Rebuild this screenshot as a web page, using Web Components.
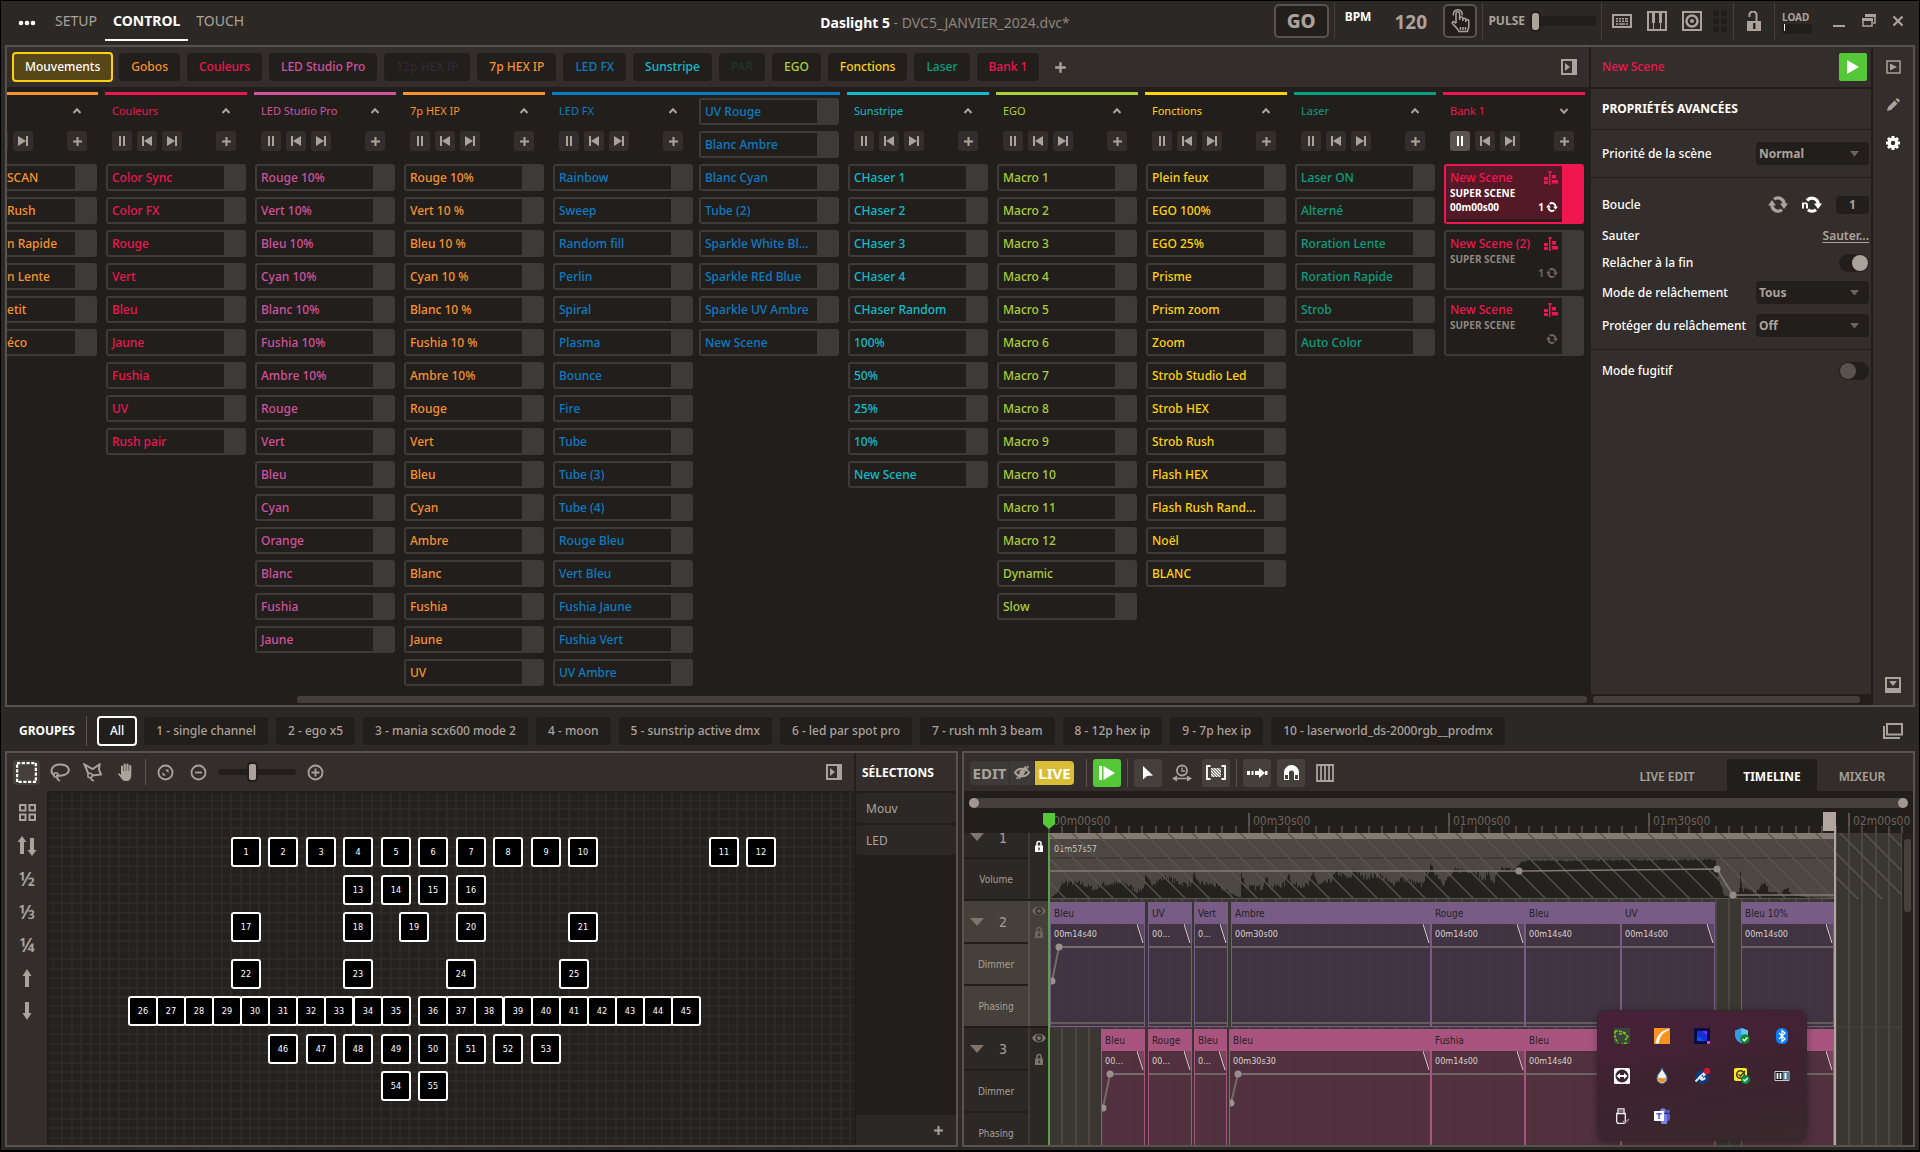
<!doctype html>
<html lang="fr">
  <head>
    <meta charset="utf-8">
    <meta name="viewport" content="width=device-width, initial-scale=1">
    <title>Daslight 5</title>
    <style>
      html {
        --bg: #2c2825;
        --panel: #332e2b;
        --dark: #211e1b;
        --line: #5a524c;
        --muted: #aba29b;
        --raised: #3e3a37;
        --orange: #f7922d;
        --red: #ee1650;
        --pink: #d1529e;
        --blue: #0b7cc2;
        --cyan: #10bccb;
        --lime: #abd037;
        --yellow: #ffd20a;
        --green: #0a9f80;
        --go: #54c837;
        font: 500 12px/16px "Noto Sans", "Open Sans", sans-serif;
        color: var(--muted);
        background: #000;
      }
      body {
        margin: 0;
      }
    </style>
  </head>
  <body>
    <light-desk></light-desk>
    <script>
      const BASE = `
        * { box-sizing: border-box; }
        button, input, select { font: inherit; color: inherit; margin: 0; padding: 0; border: 0; background: none; }
        button { cursor: pointer; }
        a { color: inherit; }
        h1, h2, p { margin: 0; font: inherit; }
      `;

      const define = (name, css, html) => {
        customElements.define(name, class extends HTMLElement {
          constructor() {
            super();
            this.attachShadow({ mode: 'open' });
          }
          connectedCallback() {
            const markup = typeof html === 'function' ? html(this) : html;
            this.shadowRoot.innerHTML = `<style>${BASE}${css}</style>${markup}`;
          }
        });
      };

      // [width, height, svg body]
      const ICONS = {
        dots: [18, 6, '<circle cx="3" cy="3" r="2.3"/><circle cx="9" cy="3" r="2.3"/><circle cx="15" cy="3" r="2.3"/>'],
        plus: [11, 11, '<path d="M4.500 1h2v3.500H10v2H6.500V10h-2V6.500H1v-2h3.500z"/>'],
        up: [10, 8, '<path d="M1.500 6 5 2.200 8.500 6" fill="none" stroke="currentColor" stroke-width="2"/>'],
        down: [10, 8, '<path d="M1.500 2 5 5.800 8.500 2" fill="none" stroke="currentColor" stroke-width="2"/>'],
        pause: [10, 10, '<path d="M2 0h2v10H2zM6 0h2v10H6z"/>'],
        prev: [12, 12, '<path d="M1 1h2v10H1zM11 1v10L3 6z"/>'],
        next: [12, 12, '<path d="M9 1h2v10H9zM1 1v10l8-5z"/>'],
        tap: [22, 26, '<path d="M7 15V5.500a1.800 1.800 0 0 1 3.600 0V12m0-1.500a1.600 1.600 0 0 1 3.200 0V13m0-1.200a1.500 1.500 0 0 1 3 0V14m0-1a1.500 1.500 0 0 1 3 0v5c0 3-1 4-1.500 5.500H10C8.500 20 6 18.500 3.500 15.500c-1-1.500 1-2.500 2.200-1.300L7 15.500M4.500 7.500a4.500 4.500 0 1 1 8.600 0M14 19v3m2.500-3v3M11.500 19v3" fill="none" stroke="currentColor" stroke-width="1.500"/>'],
        keyboard: [20, 14, '<path d="M1 1h18v12H1z" fill="none" stroke="currentColor" stroke-width="2"/><path d="M4 4h2v1.500H4zm3 0h2v1.500H7zm3 0h2v1.500h-2zm3 0h3v1.500h-3zM4 6.500h2V8H4zm3 0h2V8H7zm3 0h2V8h-2zm3 0h3V8h-3zM4 9.200h2v1.500H4zm3 0h6v1.500H7zm7 0h2v1.500h-2z"/>'],
        piano: [20, 20, '<path d="M1 1h18v18H1z" fill="none" stroke="currentColor" stroke-width="2"/><path d="M5 1h3v11H5zM12 1h3v11h-3zM6 12h1v7H6zM13 12h1v7h-1z"/>'],
        disc: [20, 20, '<path d="M1 1h18v18H1z" fill="none" stroke="currentColor" stroke-width="2"/><circle cx="10" cy="10" r="5.500" fill="none" stroke="currentColor" stroke-width="2.500"/><circle cx="10" cy="10" r="2"/>'],
        pads: [14, 24, '<rect y="1" width="6" height="6" rx="1"/><rect x="8" y="1" width="6" height="6" rx="1"/><rect y="9" width="6" height="6" rx="1"/><rect x="8" y="9" width="6" height="6" rx="1"/><rect y="17" width="6" height="6" rx="1"/><rect x="8" y="17" width="6" height="6" rx="1"/>'],
        unlock: [14, 20, '<path d="M2.500 6V4.500a3.500 3.500 0 0 1 7-1V10" fill="none" stroke="currentColor" stroke-width="2"/><path d="M0 10h14v10H0z"/><path d="M6 12h2.500v6H6z" fill="#2c2825"/>'],
        min: [14, 14, '<path d="M1 11h12v2H1z"/>'],
        restore: [14, 14, '<path d="M4 3V1h9v8h-2" fill="none" stroke="currentColor" stroke-width="1.500"/><path d="M3 0h11v3H3z"/><path d="M1 5h9v7H1z" fill="none" stroke="currentColor" stroke-width="1.500"/><path d="M0 4h11v3H0z"/>'],
        close: [12, 12, '<path d="m1.500 1.500 9 9m0-9-9 9" stroke="currentColor" stroke-width="2.200"/>'],
        dock: [16, 16, '<path d="M0 0h16v16H0zM2 2v12h9V2z" fill-rule="evenodd"/><path d="M4 4v8l5-4z"/>'],
        dockdown: [16, 16, '<path d="M0 0h16v16H0zM2 2v9h12V2z" fill-rule="evenodd"/><path d="M4 4h8l-4 5z"/>'],
        preview: [15, 14, '<path d="M1 1h13v12H1z" fill="none" stroke="currentColor" stroke-width="1.500"/><path d="M4 3.500v7L11 7z"/>'],
        pencil: [14, 14, '<path d="m1 13 1-4 6.500-6.500 3 3L5 12zM9.500 1.500l1-1a1 1 0 0 1 1.400 0l1.600 1.600a1 1 0 0 1 0 1.400l-1 1z"/>'],
        gear: [14, 14, '<circle cx="7" cy="7" r="3.800" fill="none" stroke="currentColor" stroke-width="3.200"/><path d="M7 0v2.500M7 11.500V14M0 7h2.500m9 0H14M2 2l2 2m6 6 2 2m0-10-2 2m-6 6-2 2" stroke="currentColor" stroke-width="3"/>'],
        play: [14, 14, '<path d="M1 0v14l12-7z"/>'],
        loop: [20, 17, '<path d="M6 3.200A6.300 6.300 0 0 1 16.200 8M14 13.800A6.300 6.300 0 0 1 3.800 9" fill="none" stroke="currentColor" stroke-width="3.200"/><path d="M0 9.500h8L4 4zM12 7.500h8L16 13z"/>'],
        loopn: [20, 17, '<path d="M5 4.500A6.300 6.300 0 0 1 16.200 8M14 13.800a6.300 6.300 0 0 1-8 0" fill="none" stroke="currentColor" stroke-width="3.200"/><path d="M12 7.500h8L16 13zM0 6.500h2v.8a2.200 2.200 0 0 1 4 1.200v4H4V9c0-1.200-2-1.200-2 0v3.500H0z"/>'],
        scene: [14, 14, '<path d="M5 0h1.500v14H5zM4.500 0h3v2h-3zM8 4h4v3.500H8zM0 6h4v3H0zM0 10h4v3H0zM8 9h6v3.500H8z"/>'],
        tri: [9, 6, '<path d="M0 0h9L4.500 5.500z"/>'],
        windows: [20, 16, '<path d="M4 1h15v10.500H4zM1 3v12h16" fill="none" stroke="currentColor" stroke-width="2"/>'],
        marquee: [21, 21, '<path d="M1 1h19v19H1z" fill="none" stroke="currentColor" stroke-width="2.500" stroke-dasharray="3.200 1.550"/>'],
        lasso: [20, 19, '<path d="M4.500 12.500C-1 9 1.500 1.500 10 1.500c10 0 11.500 8 4 10.500-2.500.8-5 .8-8 .5" fill="none" stroke="currentColor" stroke-width="2"/><circle cx="6" cy="12" r="2.200" fill="none" stroke="currentColor" stroke-width="1.500"/><path d="M7 14c0 2 1 3 3 4" fill="none" stroke="currentColor" stroke-width="1.800"/>'],
        polygon: [20, 19, '<path d="M5.500 11 1.500 1.500 9.500 6l7-4.500-.5 5 2 5-9 1" fill="none" stroke="currentColor" stroke-width="2"/><circle cx="7" cy="12.500" r="2.200" fill="none" stroke="currentColor" stroke-width="1.500"/><path d="M8 14c-.5 2 .5 3 3 4" fill="none" stroke="currentColor" stroke-width="1.800"/>'],
        hand: [17, 18, '<path d="M4 11V3.500a1 1 0 0 1 2 0V8h.6V1.500a1 1 0 0 1 2.200 0V8h.6V1.500a1 1 0 0 1 2.200 0V8h.6V3a1 1 0 0 1 2.100 0v9c0 3-1.500 6-4 6H8c-2 0-3-2-7-7 0-1.200 1.500-1 3 1z"/>'],
        fit: [17, 17, '<circle cx="8.500" cy="8.500" r="7" fill="none" stroke="currentColor" stroke-width="1.800"/><path d="M8 5.500h3.500V9zM9 11.500H5.500V8z"/>'],
        zoomout: [17, 17, '<circle cx="8.500" cy="8.500" r="7" fill="none" stroke="currentColor" stroke-width="1.800"/><path d="M5 7.600h7v1.800H5z"/>'],
        zoomin: [17, 17, '<circle cx="8.500" cy="8.500" r="7" fill="none" stroke="currentColor" stroke-width="1.800"/><path d="M4.500 7.600h8v1.800h-8zM7.600 4.500h1.800v8H7.600z"/>'],
        quad: [17, 17, '<path d="M1 1h5.500v5.500H1zm9.500 0H16v5.500h-5.500zM1 10.500h5.500V16H1zm9.500 0H16V16h-5.500z" fill="none" stroke="currentColor" stroke-width="2"/>'],
        swap: [20, 20, '<path d="M5 0 .5 6H3v12h4V6h2.500zM15 20l-4.500-6H13V2h4v12h2.500z"/>'],
        arrowup: [10, 18, '<path d="M5 0 .5 7H3v11h4V7h2.500z"/>'],
        arrowdown: [10, 18, '<path d="M5 18 .5 11H3V0h4v11h2.500z"/>'],
        hidden: [16, 13, '<path d="M1 6.500C4 1.500 12 1.500 15 6.500 12 11.500 4 11.500 1 6.500z" fill="none" stroke="currentColor" stroke-width="2"/><circle cx="8" cy="6.500" r="2.500"/><path d="M2.500 13 12 0M5 13 14.500 0" stroke="currentColor" stroke-width="1.400"/>'],
        eye: [14, 10, '<path d="M0 5C3-.8 11-.8 14 5 11 10.800 3 10.800 0 5z"/><circle cx="7" cy="5" r="2.700" fill="none" stroke="#2c2825" stroke-width="1.400"/>'],
        lock: [8, 12, '<path d="M2 6V3.500a2 2 0 0 1 4 0V6" fill="none" stroke="currentColor" stroke-width="1.500"/><path d="M0 5.500h8V12H0z"/><path d="M3.400 7.500h1.300v2.800H3.400z" fill="#2c2825"/>'],
        playfrom: [16, 14, '<path d="M0 0h3v14H0zM4.500 0 16 7 4.500 14z"/>'],
        cursor: [10, 14, '<path d="M0 0v13.500l4-3.500 6-.5z"/>'],
        clock: [20, 18, '<circle cx="10" cy="6.500" r="5" fill="none" stroke="currentColor" stroke-width="1.800"/><path d="M10 3.500v3.500h3" fill="none" stroke="currentColor" stroke-width="1.300"/><path d="m0 14.500 5-3v2.200h10v-2.200l5 3-5 3v-2.200H5v2.200z"/>'],
        region: [20, 15, '<path d="M4.500 1H1v13h3.500M15.500 1H19v13h-3.500" fill="none" stroke="currentColor" stroke-width="1.800"/><path d="M5 3h10v9H5z" opacity=".45"/><path d="m5 3 9 9M8 3l7 7m-4-7 4 4M5 6l6 6M5 9l3 3" stroke="currentColor"/>'],
        snap: [21, 10, '<path d="M0 3h3v4H0zm4.500 0h2v4h-2zM8 3h4V0l6 5-6 5V7H8zm10 0h2.500v4H18z"/>'],
        magnet: [17, 17, '<path d="M1 16V8.500a7.500 7.500 0 0 1 15 0V16h-5V9a2.500 2.500 0 0 0-5 0v7z"/><path d="M2 11h3v4H2zm10 0h3v4h-3z" fill="#45403a"/>'],
        bars: [18, 18, '<path d="M1 1h16v16H1zM5 1v16M9 1v16m4-16v16" fill="none" stroke="currentColor" stroke-width="1.800"/>'],
        trackdown: [14, 8, '<path d="M0 0h14L7 8z"/>'],
        marker: [12, 17, '<path d="M0 0h12v11l-6 5-6-5z"/>'],
        nvidia: [16, 16, '<path d="M0 0h16v16H0z" fill="#3c423c"/><path d="M1 3h4l7 2M1 3v7l3 5m1-9 5-1 4 4-3 3m2 3-5 1" fill="none" stroke="#76c81a" stroke-width="1.600" stroke-dasharray="3 1"/>'],
        orangeapp: [16, 16, '<path d="M0 0h16v16H0z" fill="#f7931e"/><path d="M2 15C3 8 7 3 15 1.500 9 4 5 8 4.500 15z" fill="#fff" stroke="#fff"/>'],
        blueapp: [16, 16, '<path d="M0 0h16v16H0z" fill="#040d45"/><path d="M3 3h10v10H3z" fill="#1530d8"/><path d="M8 3h5v4z" fill="#7a2fe0"/><path d="M3 13V8l8 5z" fill="#0a56e8"/><path d="M13 13h3v3h-3z" fill="#e03af0"/>'],
        shield: [16, 16, '<path d="M1 2.500 7.500 0 14 2.500V7c0 4-3 7-6.500 8.500C4 14 1 11 1 7z" fill="#2f9de0"/><path d="M7.500 0 14 2.500V7H7.500z" fill="#62c5f3"/><circle cx="11" cy="11" r="4.700" fill="#118a2c"/><path d="m8.700 11 1.700 1.700 3-3.200" fill="none" stroke="#fff" stroke-width="1.500"/>'],
        bluetooth: [16, 16, '<rect x="2" width="12" height="16" rx="5.500" fill="#0a7dfa"/><path d="m5 5 6 6-3 2.500v-11L11 5l-6 6" fill="none" stroke="#fff" stroke-width="1.300"/>'],
        viewer: [16, 16, '<rect width="16" height="16" rx="1.500" fill="#fff"/><circle cx="8" cy="8" r="6.500" fill="#35262e"/><path d="m2.500 8 3.500-3v2h4V5l3.500 3-3.500 3V9H6v2z" fill="#fff"/>'],
        drop: [16, 16, '<path d="M8 0c1 4 5 6 5 10.500A5 5 0 0 1 3 10.500C3 6 7 4 8 0z" fill="#eef3f8" stroke="#41719c"/><path d="M4 10c2-1 5 1.500 8-.5.500 3-1.500 5-4 5s-4-2-4-4.500z" fill="#eb9227"/>'],
        steam: [16, 16, '<circle cx="8" cy="9" r="7" fill="#0a3d7a"/><path d="m1.500 13.500 4-4" fill="none" stroke="#dce8f5" stroke-width="2"/><path d="m5 8 5-4 2 3-2 1 2 3-4 2-4-3z" fill="#dce8f5"/><path d="m8 7 2 3" stroke="#0a3d7a"/><circle cx="13" cy="3" r="3.200" fill="#d0142a"/>'],
        sync: [16, 16, '<rect width="13" height="13" rx="2" fill="#fde72c"/><circle cx="6.500" cy="6.500" r="3.800" fill="none" stroke="#40400e" stroke-width="1.600"/><path d="m4.500 6.500 2 1.500L11 3" fill="none" stroke="#40400e" stroke-width="1.400"/><circle cx="11.500" cy="11.500" r="4.500" fill="#0f8a43"/><path d="m9.300 11.500 1.600 1.600 2.800-3" fill="none" stroke="#fff" stroke-width="1.400"/>'],
        ni: [16, 16, '<path d="M1 3.500h14v9H1z" fill="#0c0c0c" stroke="#c5cbd0"/><path d="M8.500 4h6v8h-6z" fill="#53809a"/><path d="M3.500 5v6m3-6v6M11.500 5v6" fill="none" stroke="#fff" stroke-width="1.800"/>'],
        usb: [16, 16, '<path d="M4 5V.8h6V5M6 2.500v1m2-1v1M2.700 5.500h8.600v8l-1 2H3.700l-1-2z" fill="none" stroke="#f2eef0" stroke-width="1.300"/><path d="m9 13 2 2 4-4" fill="none" stroke="#9b9094" stroke-width="1.300"/>'],
        teams: [16, 16, '<circle cx="9" cy="3" r="2.800" fill="#7b83eb"/><circle cx="14" cy="3.500" r="2" fill="#5059c9"/><path d="M7 6h6v7a3 3 0 0 1-6 2z" fill="#7b83eb"/><path d="M13 6h3v5a2.500 2.500 0 0 1-3 2z" fill="#5059c9"/><path d="M0 3h10v10H0z" fill="#fff"/><path d="M2.500 5h5v1.500H5.800V11H4.300V6.500H2.500z" fill="#5059c9"/>'],
      };

      define('ui-icon', `
        :host { display: inline-flex; flex: none; }
        svg { display: block; fill: currentColor; }
      `, (el) => {
        const [w, h, body] = ICONS[el.getAttribute('name')];
        const k = Number(el.getAttribute('scale') || 1);
        return `<svg width="${Math.round(w * k)}" height="${Math.round(h * k)}" viewBox="0 0 ${w} ${h}" aria-hidden="true">${body}</svg>`;
      });

      define('desk-header', `
        :host { display: grid; grid-template-columns: 1fr auto 1fr; background: var(--bg); font-size: 14px; line-height: 20px; }
        nav, .tools { display: flex; align-items: stretch; }
        nav { padding-left: 16px; }
        nav button { padding: 1px 8px 0; border-bottom: 2px solid transparent; margin-bottom: 4px; font-weight: 400; }
        nav .menu { padding: 1px 1px 0; margin-right: 10px; color: #fff; }
        nav .on { color: #fff; font-weight: 700; border-color: #fff; }
        h1 { align-self: center; margin-right: 30px; font-weight: 400; color: #8d857e; }
        h1 b { color: #fff; }
        .tools { justify-content: flex-end; padding-right: 15px; font-weight: 700; font-size: 12px; line-height: 16px; }
        .tools > * { flex: none; align-self: flex-start; }
        .big { height: 34px; margin-top: 3px; border: 2px solid var(--line); border-radius: 5px; background: var(--dark); }
        .go { width: 55px; font-size: 19px; font-weight: 800; }
        .tap { width: 34px; margin-right: 5px; display: grid; place-items: center; }
        .sep { width: 1px; height: 36px; margin-top: 2px; background: #45403b; }
        .go + .sep { margin-left: 5px; }
        .bpm { color: #fff; margin: 8px 23px 0 10px; }
        .tempo { width: 33px; font-size: 19px; line-height: 24px; margin: 9px 16px 0 0; }
        .pulse { display: flex; align-items: center; gap: 7px; margin: 11px 5px 0 5px; height: 18px; }
        input[type=range] { appearance: none; width: 64px; height: 10px; border-radius: 3px; background: var(--dark); }
        input[type=range]::-webkit-slider-thumb { appearance: none; width: 7px; height: 17px; border-radius: 3px; background: var(--muted); box-shadow: 0 0 0 2px var(--dark); }
        .modes { display: flex; align-items: center; gap: 15px; height: 40px; margin: 0 6px 0 10px; }
        .modes button, .win button { display: flex; }
        .modes .pads { color: var(--dark); margin-left: -4px; }
        .lock { margin: 10px 13px 0 13px; }
        .load { font-size: 10px; line-height: 14px; margin: 9px 20px 0 7px; }
        .load i { display: block; width: 30px; height: 10px; border-radius: 3px; background: var(--dark); border-left: 2px solid var(--dark); }
        .load i::before { content: ""; display: block; width: 1px; height: 7px; background: #fff; }
        .win { display: flex; gap: 16px; align-items: center; height: 40px; }
      `, `
        <nav>
          <button class="menu" aria-label="Menu"><ui-icon name="dots"></ui-icon></button>
          <button>SETUP</button>
          <button class="on">CONTROL</button>
          <button>TOUCH</button>
        </nav>
        <h1><b>Daslight 5</b> - DVC5_JANVIER_2024.dvc*</h1>
        <div class="tools">
          <button class="big go">GO</button>
          <span class="sep"></span>
          <span class="bpm">BPM</span>
          <span class="tempo">120</span>
          <button class="big tap" aria-label="Tap"><ui-icon name="tap"></ui-icon></button>
          <span class="sep"></span>
          <label class="pulse">PULSE <input type="range" min="0" max="100" value="0"></label>
          <span class="sep"></span>
          <div class="modes">
            <button aria-label="Clavier"><ui-icon name="keyboard"></ui-icon></button>
            <button aria-label="MIDI"><ui-icon name="piano"></ui-icon></button>
            <button aria-label="Audio"><ui-icon name="disc"></ui-icon></button>
            <button class="pads" aria-label="Pads"><ui-icon name="pads"></ui-icon></button>
          </div>
          <span class="sep"></span>
          <button class="lock" aria-label="Verrouiller"><ui-icon name="unlock"></ui-icon></button>
          <span class="sep"></span>
          <div class="load">LOAD<i></i></div>
          <div class="win">
            <button aria-label="Réduire"><ui-icon name="min"></ui-icon></button>
            <button aria-label="Restaurer"><ui-icon name="restore"></ui-icon></button>
            <button aria-label="Fermer"><ui-icon name="close"></ui-icon></button>
          </div>
        </div>
      `);

      define('tab-chip', `
        :host { display: block; flex: none; }
        button { display: block; height: 28px; padding: 0 12px; border-radius: 4px; background: var(--dark); color: var(--c, inherit); white-space: nowrap; }
        :host([on]) { margin: 0 -1px; }
        :host([on]) button { height: 30px; padding: 0 11px; color: #fff; border: 2px solid var(--ring, #fff); background: var(--fill, var(--dark)); }
      `, '<button><slot></slot></button>');

      define('scene-item', `
        :host { display: block; min-width: 0; }
        :host([tall]) { grid-row: span 2; }
        button { display: flex; flex-direction: column; justify-content: center; width: 100%; height: 100%; overflow: hidden; border: 2px solid var(--raised); border-right-width: 22px; border-radius: 3px; padding: 0 0 0 var(--label-pad, 4px); text-align: left; color: var(--c); white-space: nowrap; line-height: 16px; }
        :host([tall]) button { justify-content: flex-start; padding: 4px 4px 0 4px; }
        .row { display: flex; justify-content: space-between; align-items: center; width: 100%; }
        .sub { font-weight: 700; font-size: 10px; line-height: 14px; color: #8f8780; min-height: 14px; }
        .sub span { display: flex; align-items: center; gap: 2px; color: #6e6761; }
        .sub em { font-style: normal; }
        :host([on]) button { border-color: #f0164f; background: #531927; box-shadow: inset 0 -3px #2b1a1c; }
        :host([on]) .sub, :host([on]) .sub span { color: #fff; }
      `, (el) => !el.hasAttribute('tall') ? '<button><slot></slot></button>' : `
        <button>
          <span class="row"><slot></slot><ui-icon name="scene"></ui-icon></span>
          <span class="row sub">SUPER SCENE</span>
          <span class="row sub"><em>${el.getAttribute('time') || ''}</em><span>${el.getAttribute('loops') || ''}<ui-icon name="loop" scale=".6"></ui-icon></span></span>
        </button>
      `);

      define('scene-bank', `
        :host { display: block; flex: none; border-top: 3px solid var(--c); padding: 3px 1px 0; min-width: 142px; color: var(--c); }
        .slots { display: grid; grid-template-rows: repeat(18, 27px); grid-auto-flow: column; grid-auto-columns: 140px; gap: 6px; }
        header { grid-row: span 2; padding: 0 10px 0 6px; }
        .name { display: flex; justify-content: space-between; align-items: center; height: 26px; font-size: 11px; font-weight: 400; }
        .name button { display: flex; padding: 0 5px; color: var(--muted); }
        .tools { display: flex; gap: 5px; margin-top: 7px; }
        .tools button { display: grid; place-items: center; width: 20px; height: 20px; border-radius: 3px; background: var(--panel); color: var(--muted); }
        .tools .on { background: var(--line); color: #fff; }
        .tools button:last-child { margin-left: auto; }
      `, (el) => `
        <div class="slots">
          <header>
            <div class="name"><span>${el.getAttribute('name')}</span><button aria-label="Ordre"><ui-icon name="${el.hasAttribute('on') ? 'down' : 'up'}"></ui-icon></button></div>
            <div class="tools">
              <button aria-label="Pause" class="${el.hasAttribute('on') ? 'on' : ''}"><ui-icon name="pause"></ui-icon></button>
              <button aria-label="Précédent"><ui-icon name="prev"></ui-icon></button>
              <button aria-label="Suivant"><ui-icon name="next"></ui-icon></button>
              <button aria-label="Ajouter"><ui-icon name="plus"></ui-icon></button>
            </div>
          </header>
          <slot></slot>
        </div>
      `);

      const TABS = [
        ['Mouvements', 'yellow'], ['Gobos', 'orange'], ['Couleurs', 'red'], ['LED Studio Pro', 'pink'],
        ['12p HEX IP', '#302a33'], ['7p HEX IP', 'orange'], ['LED FX', 'blue'], ['Sunstripe', 'cyan'],
        ['PAR', '#20342f'], ['EGO', 'lime'], ['Fonctions', 'yellow'], ['Laser', 'green'], ['Bank 1', 'red'],
      ];
      const BANKS = [
        ['', 'orange', ['SCAN', 'Rush', 'n Rapide', 'n Lente', 'etit', 'éco']],
        ['Couleurs', 'red', ['Color Sync', 'Color FX', 'Rouge', 'Vert', 'Bleu', 'Jaune', 'Fushia', 'UV', 'Rush pair']],
        ['LED Studio Pro', 'pink', ['Rouge 10%', 'Vert 10%', 'Bleu 10%', 'Cyan 10%', 'Blanc 10%', 'Fushia 10%', 'Ambre 10%', 'Rouge', 'Vert', 'Bleu', 'Cyan', 'Orange', 'Blanc', 'Fushia', 'Jaune']],
        ['7p HEX IP', 'orange', ['Rouge 10%', 'Vert 10 %', 'Bleu 10 %', 'Cyan 10 %', 'Blanc 10 %', 'Fushia 10 %', 'Ambre 10%', 'Rouge', 'Vert', 'Bleu', 'Cyan', 'Ambre', 'Blanc', 'Fushia', 'Jaune', 'UV']],
        ['LED FX', 'blue', ['Rainbow', 'Sweep', 'Random fill', 'Perlin', 'Spiral', 'Plasma', 'Bounce', 'Fire', 'Tube', 'Tube (3)', 'Tube (4)', 'Rouge Bleu', 'Vert Bleu', 'Fushia Jaune', 'Fushia Vert', 'UV Ambre', 'UV Rouge', 'Blanc Ambre', 'Blanc Cyan', 'Tube (2)', 'Sparkle White Bl...', 'Sparkle REd Blue', 'Sparkle UV Ambre', 'New Scene']],
        ['Sunstripe', 'cyan', ['CHaser 1', 'CHaser 2', 'CHaser 3', 'CHaser 4', 'CHaser Random', '100%', '50%', '25%', '10%', 'New Scene']],
        ['EGO', 'lime', ['Macro 1', 'Macro 2', 'Macro 3', 'Macro 4', 'Macro 5', 'Macro 6', 'Macro 7', 'Macro 8', 'Macro 9', 'Macro 10', 'Macro 11', 'Macro 12', 'Dynamic', 'Slow']],
        ['Fonctions', 'yellow', ['Plein feux', 'EGO 100%', 'EGO 25%', 'Prisme', 'Prism zoom', 'Zoom', 'Strob Studio Led', 'Strob HEX', 'Strob Rush', 'Flash HEX', 'Flash Rush Rand...', 'Noël', 'BLANC']],
        ['Laser', 'green', ['Laser ON', 'Alterné', 'Roration Lente', 'Roration Rapide', 'Strob', 'Auto Color']],
      ];
      const color = (c) => (c[0] === '#' ? c : `var(--${c})`);

      // The banks are scrolled to their right end, so the first one runs out on the left.
      define('scene-board', `
        :host { display: flex; flex-direction: column; flex: 1; min-width: 0; background: var(--dark); }
        .tabs { display: flex; align-items: center; gap: 7px; height: 40px; padding: 0 12px 0 6px; background: var(--panel); }
        .tabs tab-chip:first-child { --ring: #ffcf14; --fill: #574716; }
        .tabs .add { display: flex; padding: 0 8px; }
        .tabs .dock { display: flex; margin-left: auto; }
        .banks { display: flex; justify-content: flex-end; gap: 7px; flex: 1; min-height: 0; overflow: hidden; padding: 5px 4px 0 0; }
        .banks > :first-child { --label-pad: 48px; }
        .bar { width: calc(100% - 292px); height: 7px; border-radius: 3px; margin: 0 2px 2px auto; background: #45403a; }
      `, `
        <div class="tabs">
          ${TABS.map(([t, c], i) => `<tab-chip ${i ? '' : 'on'} style="--c: ${color(c)}">${t}</tab-chip>`).join('')}
          <button class="add" aria-label="Ajouter"><ui-icon name="plus" scale="1.2"></ui-icon></button>
          <button class="dock" aria-label="Panneau"><ui-icon name="dock"></ui-icon></button>
        </div>
        <div class="banks">
          ${BANKS.map(([name, c, items]) => `
            <scene-bank name="${name}" style="--c: ${color(c)}">
              ${items.map((t) => `<scene-item>${t}</scene-item>`).join('')}
            </scene-bank>`).join('')}
          <scene-bank on name="Bank 1" style="--c: var(--red)">
            <scene-item tall on time="00m00s00" loops="1">New Scene</scene-item>
            <scene-item tall loops="1">New Scene (2)</scene-item>
            <scene-item tall>New Scene</scene-item>
          </scene-bank>
        </div>
        <div class="bar"></div>
      `);

      define('scene-properties', `
        :host { display: flex; flex-direction: column; width: 280px; flex: none; color: #fff; }
        header, section { background: var(--panel); padding: 0 11px; }
        header { display: flex; align-items: center; justify-content: space-between; height: 40px; padding-right: 4px; margin-bottom: 2px; color: var(--red); }
        header button { display: grid; place-items: center; width: 28px; height: 28px; border-radius: 2px; background: var(--go); color: #fff; }
        section { margin-bottom: 1px; padding-right: 2px; }
        h2 { line-height: 40px; font-weight: 700; }
        .row { display: flex; align-items: center; justify-content: space-between; white-space: nowrap; }
        .r47 { height: 47px; }
        .r35 { height: 35px; }
        .r33 { height: 33px; }
        .r27 { height: 27px; }
        .group { padding-top: 9px; padding-bottom: 7px; }
        .pick { position: relative; display: flex; align-items: center; width: 113px; color: var(--muted); font-weight: 700; }
        select { appearance: none; width: 100%; height: 23px; border-radius: 4px; padding-left: 3px; background: var(--dark); }
        .pick ui-icon { position: absolute; right: 10px; color: #6b635c; }
        .loops { display: flex; align-items: center; gap: 14px; }
        .loops button { display: flex; }
        .loops button:first-child { color: var(--muted); }
        input[type=text] { width: 33px; height: 18px; border-radius: 4px; background: var(--dark); text-align: center; color: var(--muted); font-weight: 700; }
        a { color: var(--muted); font-weight: 600; text-underline-offset: 2px; }
        input[type=checkbox] { appearance: none; display: flex; width: 30px; height: 18px; padding: 1px; border-radius: 9px; background: var(--dark); }
        input[type=checkbox]::before { content: ""; width: 16px; height: 16px; border-radius: 8px; background: var(--line); }
        input[type=checkbox]:checked { justify-content: flex-end; }
        input[type=checkbox]:checked::before { background: var(--muted); }
        .fill { flex: 1; margin: 0; padding-top: 4px; }
        .bar { width: 267px; height: 7px; margin: 2px 0 2px 2px; border-radius: 3px; background: #45403a; }
      `, `
        <header><span>New Scene</span><button aria-label="Lecture"><ui-icon name="play"></ui-icon></button></header>
        <section><h2>PROPRIÉTÉS AVANCÉES</h2></section>
        <section class="row r47">
          <label for="prio">Priorité de la scène</label>
          <span class="pick"><select id="prio"><option>Normal</option></select><ui-icon name="tri"></ui-icon></span>
        </section>
        <section class="group">
          <div class="row r35">
            <label for="loop">Boucle</label>
            <span class="loops">
              <button aria-label="Infini"><ui-icon name="loop"></ui-icon></button>
              <button aria-label="Nombre"><ui-icon name="loopn"></ui-icon></button>
              <input id="loop" type="text" value="1">
            </span>
          </div>
          <div class="row r27"><span>Sauter</span><a href="#jump">Sauter...</a></div>
          <div class="row r27"><label for="rel">Relâcher à la fin</label><input id="rel" type="checkbox" role="switch" checked></div>
          <div class="row r33">
            <label for="mode">Mode de relâchement</label>
            <span class="pick"><select id="mode"><option>Tous</option></select><ui-icon name="tri"></ui-icon></span>
          </div>
          <div class="row r33">
            <label for="guard">Protéger du relâchement</label>
            <span class="pick"><select id="guard"><option>Off</option></select><ui-icon name="tri"></ui-icon></span>
          </div>
        </section>
        <section class="fill">
          <div class="row r33"><label for="flash">Mode fugitif</label><input id="flash" type="checkbox" role="switch"></div>
        </section>
        <div class="bar"></div>
      `);

      define('side-strip', `
        :host { display: flex; flex-direction: column; align-items: center; width: 40px; flex: none; padding: 1px 0 12px; background: var(--panel); }
        button { display: grid; place-items: center; width: 38px; height: 38px; }
        .on { color: #fff; }
        button:last-child { margin-top: auto; height: 16px; }
      `, `
        <button aria-label="Aperçu"><ui-icon name="preview"></ui-icon></button>
        <button aria-label="Éditer"><ui-icon name="pencil"></ui-icon></button>
        <button class="on" aria-label="Réglages"><ui-icon name="gear"></ui-icon></button>
        <button aria-label="Réduire"><ui-icon name="dockdown"></ui-icon></button>
      `);

      const GROUPS = ['All', '1 - single channel', '2 - ego x5', '3 - mania scx600 mode 2', '4 - moon', '5 - sunstrip active dmx',
        '6 - led par spot pro', '7 - rush mh 3 beam', '8 - 12p hex ip', '9 - 7p hex ip', '10 - laserworld_ds-2000rgb__prodmx'];

      define('group-bar', `
        :host { display: flex; align-items: center; gap: 8px; padding: 4px 16px 0 18px; background: var(--bg); }
        h2 { font-weight: 700; color: #fff; padding-right: 11px; margin-right: 3px; line-height: 30px; border-right: 1px solid var(--line); }
        button { display: flex; margin-left: auto; }
      `, `
        <h2>GROUPES</h2>
        ${GROUPS.map((g, i) => `<tab-chip ${i ? '' : 'on'}>${g}</tab-chip>`).join('')}
        <button aria-label="Fenêtres"><ui-icon name="windows"></ui-icon></button>
      `);

      // Runs of fixtures: first number, count, column, row, column step (grid cells)
      const RUNS = [
        [1, 10, 11, 0, 4], [11, 2, 62, 0, 4], [13, 4, 23, 4, 4], [17, 1, 11, 8, 0], [18, 3, 23, 8, 6], [21, 1, 47, 8, 0],
        [22, 1, 11, 13, 0], [23, 1, 23, 13, 0], [24, 1, 34, 13, 0], [25, 1, 46, 13, 0],
        [26, 10, 0, 17, 3], [36, 10, 31, 17, 3], [46, 8, 15, 21, 4], [54, 2, 27, 25, 4],
      ];
      const CELL = 75 / 8;

      define('fixture-map', `
        :host { display: grid; grid-template: 38px minmax(0, 1fr) / 40px minmax(0, 1fr); gap: 2px; flex: 1; min-width: 0; background: var(--dark); }
        .bar { grid-column: 1 / -1; display: flex; align-items: center; gap: 6px; padding: 0 12px 0 6px; background: var(--panel); }
        .bar button { display: grid; place-items: center; width: 27px; height: 25px; border-radius: 4px; }
        .bar .on { background: #45403a; color: #fff; }
        .bar button:last-child { margin-left: auto; width: 16px; }
        .sep { width: 1px; height: 26px; background: var(--line); }
        input { appearance: none; width: 78px; height: 6px; border-radius: 3px; background: var(--dark); }
        input::-webkit-slider-thumb { appearance: none; width: 7px; height: 16px; border-radius: 2px; background: var(--muted); box-shadow: 0 0 0 2px var(--dark); }
        aside { display: flex; flex-direction: column; align-items: center; background: var(--panel); padding-top: 5px; margin-top: -2px; }
        aside button { display: grid; place-items: center; width: 33px; height: 33px; font-size: 19px; font-weight: 600; }
        .stage { position: relative; overflow: hidden; background: #25211e; }
        .stage svg { position: absolute; inset: 0; }
        .stage b { position: absolute; width: 30px; height: 30px; border: 2px solid #fff; border-radius: 3px; background: #000; color: #fff; font: 9px/26px "DejaVu Sans Condensed", "DejaVu Sans", sans-serif; text-align: center; }
      `, () => {
        const lines = [0, 9, 19, 28, 38, 47, 56, 66].map((p) => `M${p} 0v75M0 ${p}h75`).join('');
        const fixtures = RUNS.map(([first, count, col, row, step]) =>
          Array.from({ length: count }, (_, i) => {
            const x = Math.floor(79 + (col + i * step) * CELL);
            const y = Math.round(44 + row * CELL);
            return `<b style="left: ${x}px; top: ${y}px">${first + i}</b>`;
          }).join('')).join('');
        return `
          <div class="bar">
            <button class="on" aria-label="Rectangle"><ui-icon name="marquee"></ui-icon></button>
            <button aria-label="Lasso"><ui-icon name="lasso"></ui-icon></button>
            <button aria-label="Polygone"><ui-icon name="polygon"></ui-icon></button>
            <button aria-label="Main"><ui-icon name="hand"></ui-icon></button>
            <span class="sep"></span>
            <button aria-label="Ajuster"><ui-icon name="fit"></ui-icon></button>
            <button aria-label="Zoom arrière"><ui-icon name="zoomout"></ui-icon></button>
            <input type="range" min="0" max="100" value="44" aria-label="Zoom">
            <button aria-label="Zoom avant"><ui-icon name="zoomin"></ui-icon></button>
            <button aria-label="Panneau"><ui-icon name="dock"></ui-icon></button>
          </div>
          <aside>
            <button aria-label="Tous"><ui-icon name="quad"></ui-icon></button>
            <button aria-label="Inverser"><ui-icon name="swap"></ui-icon></button>
            <button>½</button>
            <button>⅓</button>
            <button>¼</button>
            <button aria-label="Monter"><ui-icon name="arrowup"></ui-icon></button>
            <button aria-label="Descendre"><ui-icon name="arrowdown"></ui-icon></button>
          </aside>
          <div class="stage">
            <svg width="100%" height="100%"><defs><pattern id="g" x="4" y="7" width="75" height="75" patternUnits="userSpaceOnUse"><path d="${lines}" stroke="#2d2926" stroke-width="2"/></pattern></defs><rect width="100%" height="100%" fill="url(#g)"/></svg>
            ${fixtures}
          </div>`;
      });

      define('selection-list', `
        :host { display: flex; flex-direction: column; gap: 2px; width: 100px; flex: none; background: var(--dark); font-weight: 400; }
        h2 { height: 38px; line-height: 39px; padding-left: 6px; background: var(--panel); color: #fff; font-weight: 700; }
        button { height: 30px; padding: 1px 0 0 10px; text-align: left; background: var(--bg); border-radius: 3px; }
        .add { margin-top: auto; display: flex; align-items: center; justify-content: flex-end; padding: 0 12px 0 0; border-radius: 0; }
      `, `
        <h2>SÉLECTIONS</h2>
        <button>Mouv</button>
        <button>LED</button>
        <button class="add" aria-label="Ajouter"><ui-icon name="plus"></ui-icon></button>
      `);

      define('time-clip', `
        :host { display: flex; flex-direction: column; position: relative; flex: none; height: 125px; border: solid var(--head); border-width: 0 1px 1px; background: var(--body); color: #d8d2ce; overflow: hidden; }
        .name { flex: none; height: 22px; padding: 4px 3px 0; background: var(--head); color: #27211f; font-size: 10px; line-height: 16px; white-space: nowrap; }
        .time { flex: none; height: 24px; padding: 2px 3px 0; font-size: 9px; line-height: 16px; border-bottom: 2px solid #6d6463; }
        .foot { margin: auto 0 2px; height: 2px; background: #655c5e; }
        :host([fadein]) .time { border-color: transparent; }
        .tail { position: absolute; top: 21px; right: 0; }
        .env { position: absolute; left: 0; top: 40px; }
      `, (el) => {
        const fade = el.getAttribute('fadein');
        const env = fade ? `<svg class="env" width="300" height="50"><path d="M1 ${fade} 8 5h300" fill="none" stroke="#756c6a" stroke-width="2"/><circle cx="1" cy="${fade}" r="3.500" fill="#9a918c"/><circle cx="8" cy="5" r="3.500" fill="#9a918c"/></svg>` : '';
        const tail = el.hasAttribute('hard') ? '' : '<svg class="tail" width="7" height="21"><path d="M1 1h6v19z" fill="var(--head)" opacity=".5"/><path d="M0 1l6 19" stroke="#d8d2ce" fill="none"/></svg>';
        return `<span class="name">${el.getAttribute('name') || ''}</span><span class="time">${el.getAttribute('time') || ''}</span><span class="foot"></span>${env}${tail}`;
      });

      // gap before the clip, width, name, duration, extra attributes
      const TRACKS = [
        ['#775c85', 'rgb(66 51 66 / 92%)', [
          [2, 95, 'Bleu', '00m14s40', 'fadein="39"'], [3, 44, 'UV', '00...'], [2, 34, 'Vert', '0...'], [3, 200, 'Ambre', '00m30s00'],
          [0, 94, 'Rouge', '00m14s00'], [0, 96, 'Bleu', '00m14s40', 'hard'], [0, 94, 'UV', '00m14s00'], [26, 93, 'Bleu 10%', '00m14s00']]],
        ['#a8547f', 'rgb(82 49 62 / 94%)', [
          [53, 44, 'Bleu', '00...', 'fadein="39"'], [3, 44, 'Rouge', '00...'], [2, 33, 'Bleu', '0...'], [2, 202, 'Bleu', '00m30s30', 'fadein="34"'],
          [0, 94, 'Fushia', '00m14s00'], [0, 96, 'Bleu', '00m14s40', 'hard'], [0, 94, '', ''], [26, 93, '', '']]],
      ];

      // Loudness of the audio file: [x, height]
      const LEVELS = [[0, 0], [8, 6], [13, 15], [25, 14], [30, 14], [45, 8], [50, 13], [76, 14], [86, 6], [93, 9], [95, 20], [100, 14], [116, 20], [130, 14],
        [142, 13], [143, 26], [146, 15], [165, 12], [176, 7], [187, 1], [190, 1], [191, 24], [196, 10], [212, 10], [215, 22], [220, 10], [234, 13], [238, 25], [242, 13],
        [258, 12], [263, 25], [268, 12], [280, 16], [286, 25], [300, 18], [303, 29], [312, 20], [330, 22], [341, 13], [351, 19], [371, 12], [380, 31], [393, 14],
        [405, 27], [425, 27], [433, 16], [438, 26], [443, 13], [448, 28], [465, 27], [472, 37], [663, 38], [665, 38], [668, 18], [674, 3], [680, 0], [684, 2], [686, 5],
        [689, 9], [690, 26], [692, 8], [705, 6], [713, 15], [719, 6], [730, 4], [737, 9], [742, 3], [755, 1], [784, 0]];
      const wave = () => {
        let seed = 7;
        let k = 0;
        let d = 'M0 40';
        for (let x = 0; x < 784; x += 1) {
          while (LEVELS[k + 1][0] < x) k += 1;
          const [x0, y0] = LEVELS[k];
          const [x1, y1] = LEVELS[k + 1];
          seed = (seed * 16807) % 2147483647;
          const level = y0 + (y1 - y0) * (x - x0) / (x1 - x0);
          const noise = (seed / 2147483647 - 0.4) * Math.min(level * 0.6, level > 34 ? 2 : 6);
          d += `V${(40 - Math.max(0, level + noise)).toFixed(1)}h1`;
        }
        return `${d}V40z`;
      };

      define('time-line', `
        :host { display: flex; flex-direction: column; flex: 1; min-width: 0; background: var(--dark); }
        .bar { display: flex; align-items: center; gap: 6px; height: 38px; padding: 1px 0 0 6px; background: var(--panel); margin-bottom: 2px; flex: none; }
        .bar > button { display: grid; place-items: center; width: 28px; height: 28px; border-radius: 3px; }
        .bar > .lit { background: #45403a; color: #fff; }
        .bar > .run { background: var(--go); color: #fff; }
        .sep { width: 1px; height: 28px; background: var(--line); }
        .mode { display: flex; gap: 1px; margin-right: 6px; border-radius: 4px; overflow: hidden; font-size: 15px; font-weight: 700; }
        .mode button { display: grid; place-items: center; width: 39px; height: 24px; background: #3e3a37; }
        .mode button:nth-child(2) { width: 24px; }
        .mode .live { background: #d9bd38; color: #fff; }
        .views { display: flex; align-self: flex-end; margin: 0 6px 0 auto; height: 32px; }
        .views button { width: 90px; padding-top: 3px; font-weight: 600; }
        .views button:first-child { width: 120px; }
        .views .on { background: var(--dark); color: #fff; font-weight: 700; border-radius: 2px 2px 0 0; }
        .range { display: flex; justify-content: space-between; flex: none; height: 10px; margin: 5px; border-radius: 5px; background: #45403a; }
        .range i { width: 10px; height: 10px; border-radius: 5px; background: #a29891; }
        .ruler, .tracks { font-family: "DejaVu Sans Condensed", "DejaVu Sans", sans-serif; font-weight: 400; }
        .ruler { position: relative; flex: none; display: flex; height: 20px; margin-left: 84px; font-size: 12px; line-height: 16px; color: #6b635c; }
        .ruler::after { content: ""; position: absolute; left: 0; right: 0; bottom: 0; height: 7px; background: var(--ticks); }
        .ruler span { flex: none; width: 200px; padding-left: 3px; border-left: 2px solid var(--line); }
        .ruler span:last-child { flex: 1 1 0; width: 0; }
        :host { --ticks: linear-gradient(90deg, transparent 13px, #4b4640 13px 15px, transparent 15px 27px, #4b4640 27px 29px, transparent 29px) 0 0 / 40px 100%, linear-gradient(90deg, #4b4640 2px, transparent 2px) 0 0 / 40px 100%; }
        .tracks { display: flex; flex: 1; min-height: 0; position: relative; font-size: 10px; line-height: 14px; }
        .heads { width: 84px; flex: none; overflow: hidden; }
        .head { display: grid; grid-template: 41px 40px 40px / 64px 18px; gap: 2px; height: 127px; background: var(--dark); }
        .head > * { display: flex; align-items: center; justify-content: center; background: var(--bg); color: #a8a099; padding-top: 1px; }
        .head .no { justify-content: flex-start; padding-left: 6px; font-size: 14px; line-height: 16px; }
        .head .no ui-icon { color: #7d756e; }
        .head .no b { flex: 1; padding-right: 6px; font-weight: 400; text-align: center; }
        .head .flags { grid-area: 1 / 2 / -1 / 3; flex-direction: column; justify-content: flex-start; gap: 10px; padding-top: 5px; color: #7d756e; box-shadow: -2px 0 #3e3a36; }
        .head.first { grid-template-rows: 24px 40px; height: 68px; }
        .head.first .no { align-items: flex-start; padding-top: 0; }
        .head.first .no b { line-height: 10px; }
        .head.first .flags { color: #fff; padding-top: 7px; }
        .head.sel > * { background: #45413a; }
        .head.sel .flags { color: #6b645c; box-shadow: -2px 0 #56514a; }
        .lanes { flex: 1; min-width: 0; overflow: hidden; background: var(--ticks), #3a3733; }
        .lane { display: flex; height: 127px; padding-top: 1px; box-shadow: inset 0 -2px rgb(70 66 60 / 60%); }
        .audio { position: relative; height: 68px; }
        .audio .clip { position: absolute; left: 2px; top: 0; width: 784px; height: 66px; background: #4c4741; border-top: 6px solid #837a73; border-bottom: 2px solid #5b554f; color: #cdc6bf; font-size: 9px; padding: 3px 4px; }
        .audio svg { position: absolute; left: 2px; top: 0; }
        .mark { position: absolute; left: 79px; top: -20px; color: var(--go); }
        .playhead { position: absolute; left: 84px; top: 0; bottom: 0; width: 2px; background: #5f9e4a; }
        .end { position: absolute; left: 859px; top: -21px; bottom: 0; width: 13px; border-right: 2px solid #b0a59f; background: linear-gradient(#b0a59f 19px, transparent 19px); }
        .vbar { width: 11px; flex: none; padding: 6px 2px; background: #25211e; }
        .vbar::before { content: ""; display: block; height: 73px; border-radius: 3px; background: #45403a; }
      `, () => {
        const stripes = Array.from({ length: 42 }, (_, i) => `M${i * 24 - 76} -2l70 70`).join('');
        const head = (no, cls) => `
          <div class="head ${cls}">
            <span class="no"><ui-icon name="trackdown"></ui-icon><b>${no}</b></span>
            <span class="flags"><ui-icon name="eye"></ui-icon><ui-icon name="lock"></ui-icon></span>
            <span>Dimmer</span><span>Phasing</span>
          </div>`;
        const lane = ([headColor, body, clips]) => `
          <div class="lane" style="--head: ${headColor}; --body: ${body}">
            ${clips.map(([gap, w, name, time, extra = '']) => `<time-clip style="margin-left: ${gap}px; width: ${w}px" name="${name}" time="${time}" ${extra}></time-clip>`).join('')}
          </div>`;
        return `
          <div class="bar">
            <div class="mode"><button>EDIT</button><button aria-label="Aveugle"><ui-icon name="hidden"></ui-icon></button><button class="live">LIVE</button></div>
            <span class="sep"></span>
            <button class="run" aria-label="Lecture"><ui-icon name="playfrom"></ui-icon></button>
            <span class="sep"></span>
            <button class="lit" aria-label="Curseur"><ui-icon name="cursor"></ui-icon></button>
            <button aria-label="Temps"><ui-icon name="clock"></ui-icon></button>
            <button class="lit" aria-label="Région"><ui-icon name="region"></ui-icon></button>
            <span class="sep"></span>
            <button class="lit" aria-label="Suivre"><ui-icon name="snap"></ui-icon></button>
            <button class="lit" aria-label="Aimant"><ui-icon name="magnet"></ui-icon></button>
            <button aria-label="Grille"><ui-icon name="bars"></ui-icon></button>
            <div class="views"><button>LIVE EDIT</button><button class="on">TIMELINE</button><button>MIXEUR</button></div>
          </div>
          <div class="range"><i></i><i></i></div>
          <div class="ruler"><span>00m00s00</span><span>00m30s00</span><span>01m00s00</span><span>01m30s00</span><span>02m00s00</span></div>
          <div class="tracks">
            <div class="heads">
              <div class="head first">
                <span class="no"><ui-icon name="trackdown"></ui-icon><b>1</b></span>
                <span class="flags"><ui-icon name="lock"></ui-icon></span>
                <span>Volume</span>
              </div>
              ${head('2', 'sel')}${head('3', '')}
            </div>
            <div class="lanes">
              <div class="audio">
                <div class="clip">01m57s57</div>
                <svg width="852" height="66">
                  <path d="M0 25h784" stroke="#403c37" stroke-width="2"/>
                  <path d="${wave()}" transform="translate(0 25)" fill="#24221e"/>
                  <path d="${stripes}" stroke="#5a554f" fill="none" stroke-width="1.300"/>
                  <path d="M0 38h469l198-2 16 26h101" stroke="#827972" stroke-width="1.500" fill="none"/>
                  <g fill="#958c86"><circle cx="469" cy="38" r="3.500"/><circle cx="667" cy="36" r="3.500"/><circle cx="683" cy="62" r="3.500"/></g>
                </svg>
              </div>
              ${TRACKS.map(lane).join('')}
            </div>
            <div class="vbar"></div>
            <i class="playhead"></i>
            <ui-icon class="mark" name="marker"></ui-icon>
            <i class="end"></i>
          </div>`;
      });

      const TRAY = ['nvidia', 'orangeapp', 'blueapp', 'shield', 'bluetooth', 'viewer', 'drop', 'steam', 'sync', 'ni', 'usb', 'teams'];

      define('tray-popup', `
        :host { display: grid; grid-template-columns: repeat(5, 16px); gap: 24px; padding: 17px 16px 16px; border-radius: 8px; background: linear-gradient(170deg, #48213b, #3f2230 45%, #38282c); box-shadow: 0 0 0 1px #33272b, 0 2px 8px rgb(0 0 0 / 40%); }
        button { display: flex; }
      `, TRAY.map((n) => `<button aria-label="${n}"><ui-icon name="${n}"></ui-icon></button>`).join(''));

      define('light-desk', `
        :host { display: grid; grid-template: 44px minmax(0, 1fr) 44px 396px / minmax(0, 1fr); height: 100vh; box-sizing: border-box; position: relative; padding-bottom: 3px; border: solid #000; border-width: 1px 1px 2px; background: var(--bg); }
        .frame { display: flex; flex: 1; gap: 2px; min-width: 0; border: 2px solid var(--line); background: var(--dark); overflow: hidden; }
        main, .bottom { display: flex; gap: 4px; margin: 0 4px; min-width: 0; min-height: 0; }
        tray-popup { position: absolute; right: 113px; bottom: 10px; }
      `, `
        <desk-header></desk-header>
        <main><div class="frame"><scene-board></scene-board><scene-properties></scene-properties><side-strip></side-strip></div></main>
        <group-bar></group-bar>
        <div class="bottom">
          <div class="frame"><fixture-map></fixture-map><selection-list></selection-list></div>
          <div class="frame"><time-line></time-line></div>
        </div>
        <tray-popup></tray-popup>
      `);
    </script>
  </body>
</html>
